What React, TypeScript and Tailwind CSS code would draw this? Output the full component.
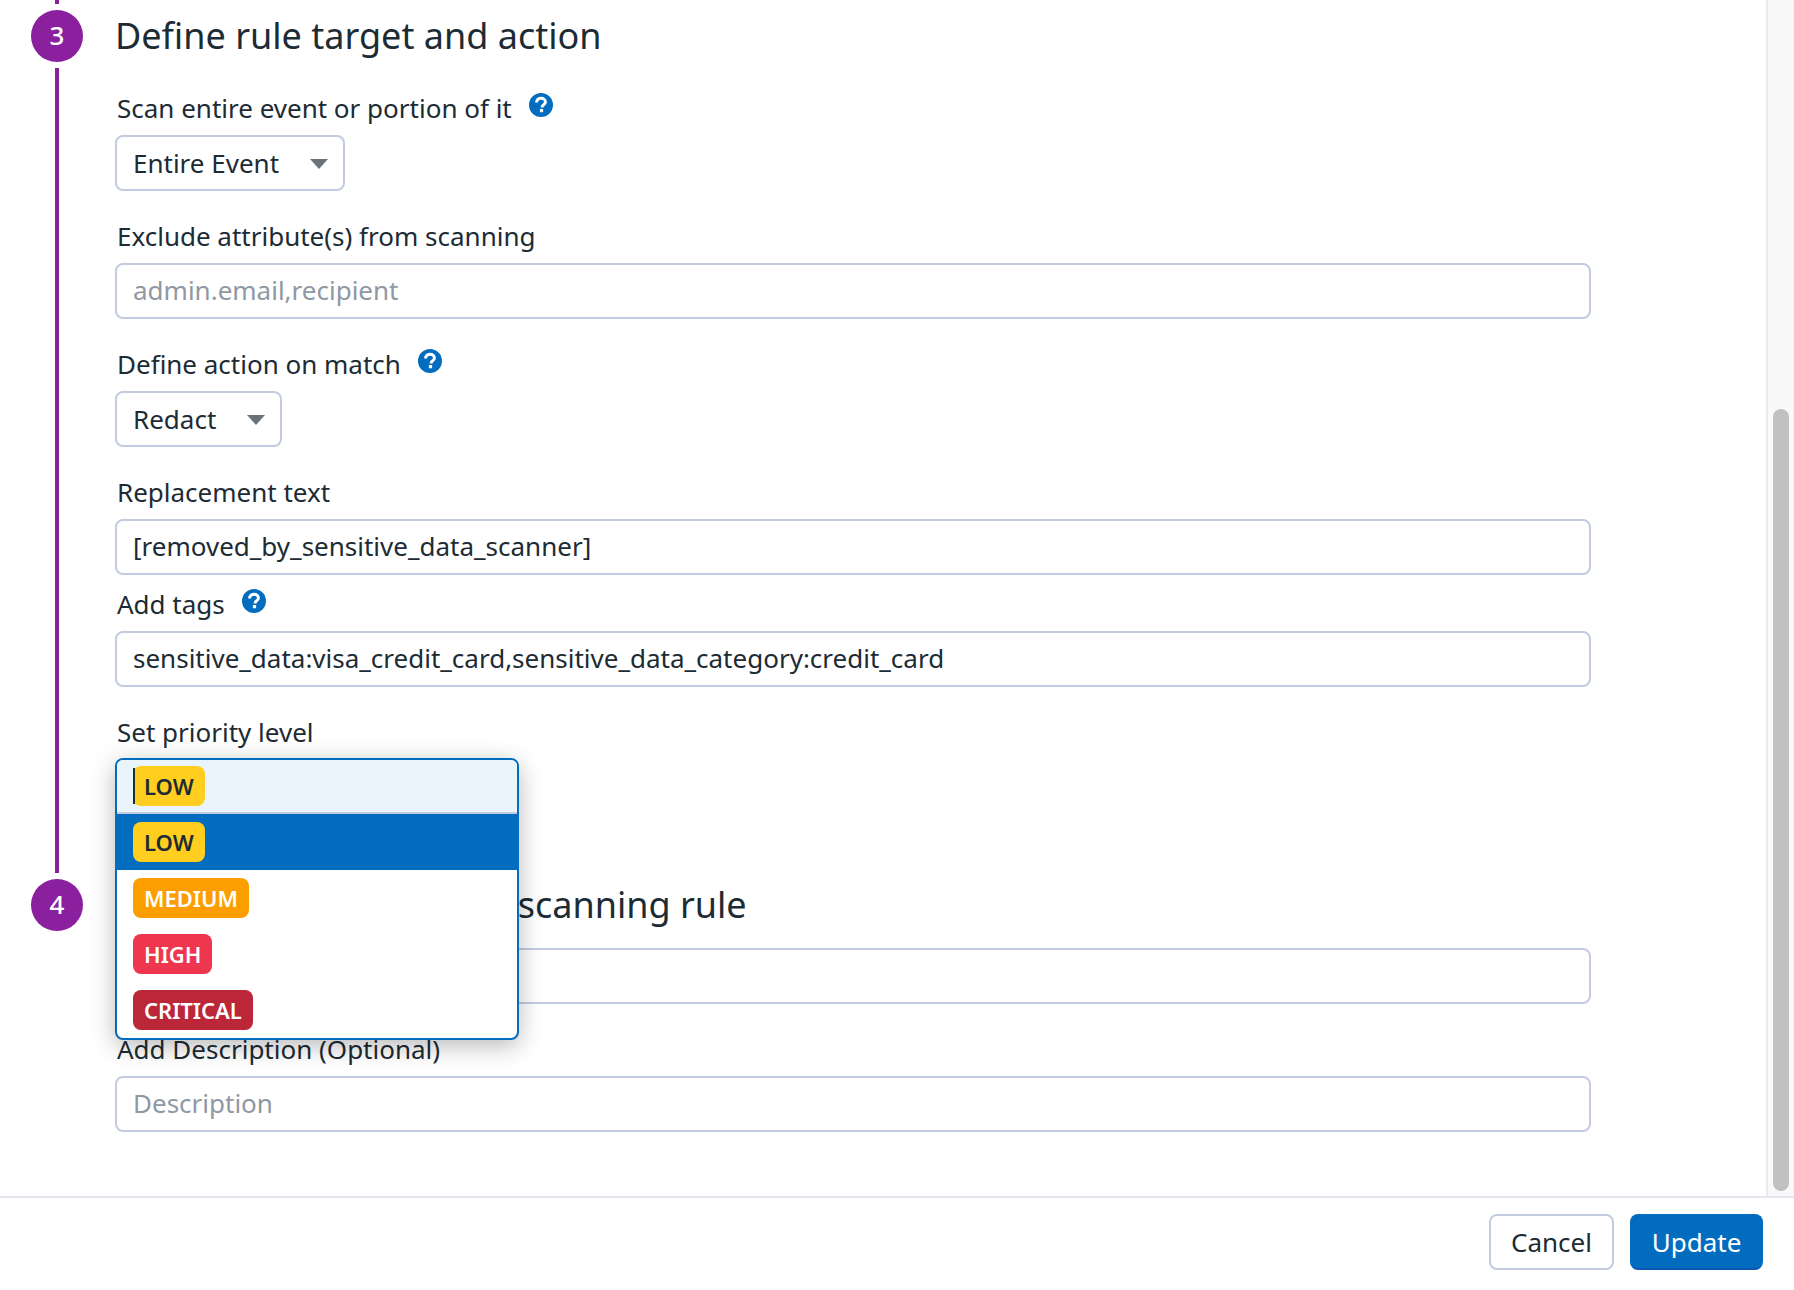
const font = { fontFamily: '"Noto Sans", sans-serif' };

function HelpIcon() {
  return (
    <svg viewBox="0 0 24 24" className="w-6 h-6 ml-[17px] -translate-y-[5px] shrink-0">
      <circle cx="12" cy="12" r="12" fill="#026cbf" />
      <path d="M7.6 9.4c0-2.5 1.9-4.1 4.5-4.1 2.5 0 4.3 1.5 4.3 3.6 0 1.6-.8 2.4-2 3.2-1 .7-1.3 1.1-1.3 2.3" fill="none" stroke="#fff" strokeWidth="3" />
      <rect x="10.9" y="16.1" width="3.2" height="3.2" rx=".4" fill="#fff" />
    </svg>
  );
}

function Label({ children, help, className = "" }: { children: React.ReactNode; help?: boolean; className?: string }) {
  return (
    <div className={`flex items-center h-8 mb-[9px] pl-[2px] text-[26px] leading-8 text-[#1c2b34] ${className}`}>
      <span className="-translate-y-[2px]">{children}</span>
      {help && <HelpIcon />}
    </div>
  );
}

function Input({ value, placeholder }: { value?: string; placeholder?: string }) {
  return (
    <div className={`flex items-center h-14 w-[1476px] px-4 pb-[2px] border-2 border-[#c3cbe0] rounded-lg bg-white text-[26px] ${placeholder ? "text-[#8f98a3]" : "text-[#1c2b34]"}`}>
      {value || placeholder}
    </div>
  );
}

function Select({ value, width }: { value: string; width: string }) {
  return (
    <div className={`flex items-center justify-between h-14 ${width} pl-4 pr-[15px] border-2 border-[#c3cbe0] rounded-lg bg-white text-[26px] text-[#1c2b34]`}>
      <span>{value}</span>
      <svg viewBox="0 0 18 10" className="w-[18px] h-[10px] mt-[2px]">
        <path d="M0 0h18L9 10z" fill="#6b747c" />
      </svg>
    </div>
  );
}

function Badge({ label, color, dark }: { label: string; color: string; dark?: boolean }) {
  return (
    <span className={`inline-flex items-center h-10 px-[11px] rounded-lg text-[22px] font-semibold ${color} ${dark ? "text-[#1c2b34]" : "text-white"}`}>
      {label}
    </span>
  );
}

function PriorityMenu() {
  return (
    <div className="absolute left-0 -top-px z-10 w-[404px] h-[282px] bg-white border-2 border-[#026cbf] rounded-lg overflow-hidden shadow-[0_6px_24px_rgba(0,0,0,0.28)]">
      <div className="relative flex items-center h-[54px] pl-4 bg-[#eaf5fb] border-b-2 border-[#c3cbe0]">
        <span className="absolute left-4 top-2 w-[2px] h-9 bg-[#1c2b34] z-10" />
        <Badge label="LOW" color="bg-[#ffce1f]" dark />
      </div>
      <div className="flex items-center h-14 pl-4 bg-[#026cbf]">
        <Badge label="LOW" color="bg-[#ffce1f]" dark />
      </div>
      <div className="flex items-center h-14 pl-4">
        <Badge label="MEDIUM" color="bg-[#fc9e00]" />
      </div>
      <div className="flex items-center h-14 pl-4">
        <Badge label="HIGH" color="bg-[#ee364f]" />
      </div>
      <div className="flex items-center h-14 pl-4">
        <Badge label="CRITICAL" color="bg-[#bb2739]" />
      </div>
    </div>
  );
}

export default function App() {
  return (
    <div className="w-[1794px] h-[1290px] flex flex-col overflow-hidden bg-white" style={font}>
      <div className="flex h-[1196px]">
        <div className="flex-1 flex">
          {/* timeline */}
          <div className="w-[52px] ml-[31px] flex flex-col items-center">
            <div className="w-1 h-1 bg-[#8a209e]" />
            <div className="w-[52px] h-[52px] mt-[6px] pb-[2px] rounded-full bg-[#8a209e] flex items-center justify-center text-white text-[26px] font-medium">3</div>
            <div className="w-1 h-[805px] mt-[6px] bg-[#8a209e]" />
            <div className="w-[52px] h-[52px] mt-[6px] pb-[2px] rounded-full bg-[#8a209e] flex items-center justify-center text-white text-[26px] font-medium">4</div>
          </div>
          {/* form */}
          <div className="ml-[32px] pt-[10px]">
            <h2 className="h-[52px] text-[36px] leading-[52px] text-[#1c2b34] font-normal mb-8">Define rule target and action</h2>
            <Label help>Scan entire event or portion of it</Label>
            <Select value="Entire Event" width="w-[230px]" />
            <Label className="mt-[31px]">Exclude attribute(s) from scanning</Label>
            <Input placeholder="admin.email,recipient" />
            <Label help className="mt-[31px]">Define action on match</Label>
            <Select value="Redact" width="w-[167px]" />
            <Label className="mt-[31px]">Replacement text</Label>
            <Input value="[removed_by_sensitive_data_scanner]" />
            <Label help className="mt-[15px]">Add tags</Label>
            <Input value="sensitive_data:visa_credit_card,sensitive_data_category:credit_card" />
            <Label className="mt-[31px]">Set priority level</Label>
            <div className="relative h-14">
              <PriorityMenu />
            </div>
            <h2 className="h-[52px] mt-[64px] text-[36px] leading-[52px] text-[#1c2b34] font-normal mb-[17px]">Name and describe the scanning rule</h2>
            <Input placeholder="Rule name" />
            <Label className="mt-[31px]">Add Description (Optional)</Label>
            <Input placeholder="Description" />
          </div>
        </div>
        {/* scrollbar */}
        <div className="w-[28px] bg-[#f9f9f9] border-l-2 border-[#ebebeb] border-r border-r-[#f1f1f1] pl-[5px] pt-[409px] pb-[5px]">
          <div className="w-4 h-full bg-[#c1c1c1] rounded-full" />
        </div>
      </div>
      <div className="flex-1 border-t-2 border-[#e2e6ed] flex justify-end items-start pt-[16px] pr-[31px] gap-4">
        <button className="h-14 w-[125px] border-2 border-[#c3cbe0] rounded-lg bg-white text-[26px] text-[#1c2b34]">Cancel</button>
        <button className="h-14 w-[133px] border-2 border-[#026cbf] border-b-[#0b55b5] rounded-lg bg-[#026cbf] text-[26px] text-white">Update</button>
      </div>
    </div>
  );
}
